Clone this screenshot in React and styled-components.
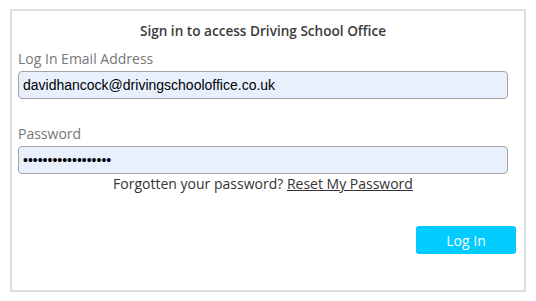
import React from 'react';
import styled, { createGlobalStyle } from 'styled-components';

const GlobalStyle = createGlobalStyle`
  body {
    margin: 0;
    background: #fff;
    font-family: 'Open Sans', sans-serif;
  }
`;

const Page = styled.div`
  padding: 9px 0 0 10px;
`;

const Panel = styled.form`
  box-sizing: border-box;
  width: 516px;
  height: 283px;
  border: 2px solid #dadfe4;
  padding: 10px 16px 0 6px;
  display: flex;
  flex-direction: column;
`;

const Title = styled.h1`
  margin: 0 0 8px;
  font-size: 13.6px;
  font-weight: 600;
  line-height: 20px;
  color: #3a3a3a;
  text-align: center;
`;

const Field = styled.div`
  display: flex;
  flex-direction: column;
  gap: 2px;
  margin-bottom: ${(p) => p.gap || 0}px;
`;

const Label = styled.label`
  font-size: 14px;
  line-height: 20px;
  color: #777;
`;

const Input = styled.input`
  box-sizing: border-box;
  height: 28px;
  width: 100%;
  padding: 0 4px;
  border: 1px solid #a3a3a3;
  border-radius: 4px;
  background: #e8f0fe;
  font-family: 'Liberation Sans', Arial, sans-serif;
  font-size: 14px;
  color: #000;
  outline: none;
`;

const Forgot = styled.p`
  margin: 0;
  font-size: 14px;
  line-height: 20px;
  color: #333;
  text-align: center;
`;

const ResetLink = styled.a`
  color: #333;
  text-decoration: underline;
  cursor: pointer;
`;

const Actions = styled.div`
  display: flex;
  justify-content: flex-end;
  margin-top: 32px;
  margin-right: -8px;
`;

const Button = styled.button`
  width: 100px;
  height: 28px;
  border: none;
  border-radius: 3px;
  background: #00ccff;
  color: #fff;
  font-family: 'Open Sans', sans-serif;
  font-size: 14px;
  cursor: pointer;
`;

export default function App() {
  return (
    <>
      <GlobalStyle />
      <Page>
        <Panel onSubmit={(e) => e.preventDefault()}>
          <Title>Sign in to access Driving School Office</Title>
          <Field gap={25}>
            <Label>Log In Email Address</Label>
            <Input type="text" defaultValue="davidhancock@drivingschooloffice.co.uk" />
          </Field>
          <Field>
            <Label>Password</Label>
            <Input type="password" defaultValue="xxxxxxxxxxxxxxxxxx" />
          </Field>
          <Forgot>
            Forgotten your password? <ResetLink>Reset My Password</ResetLink>
          </Forgot>
          <Actions>
            <Button type="submit">Log In</Button>
          </Actions>
        </Panel>
      </Page>
    </>
  );
}
